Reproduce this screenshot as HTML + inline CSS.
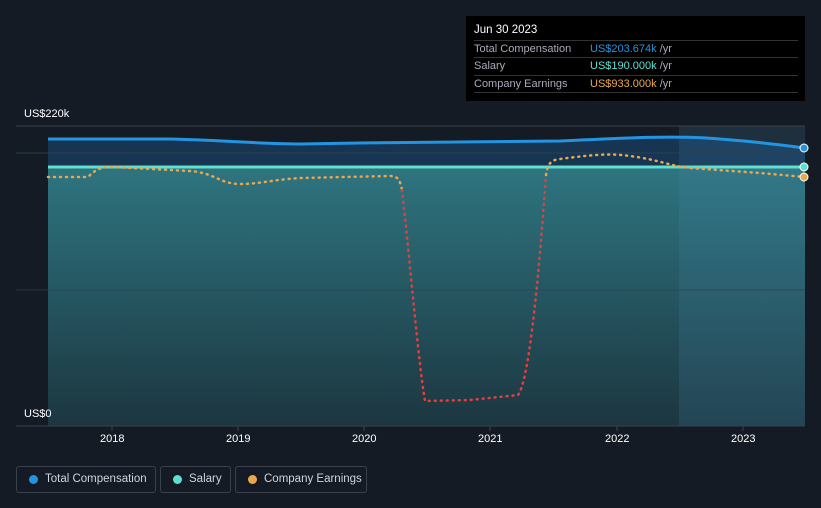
<!DOCTYPE html>
<html><head><style>
body{margin:0;background:#151b24;font-family:"Liberation Sans",sans-serif;}
.wrap{position:relative;width:821px;height:508px;overflow:hidden;}
.tt{position:absolute;left:466px;top:16px;width:339px;height:85px;background:#000;color:#fff;font-size:11px}
.tt .h{position:absolute;left:8px;top:8px;font-size:11.5px}
.tt .r{position:absolute;left:8px;width:324px;height:17px;border-top:1px solid #333;color:#aab}
.tt .r span{position:absolute;left:116px;top:2px;white-space:nowrap}
.tt .r b{font-weight:normal}
.leg{position:absolute;top:466px;height:27px;border:1px solid #3a414c;border-radius:3px;color:#cfd4da;font-size:11.5px;line-height:25px;box-sizing:border-box;white-space:nowrap;overflow:hidden}
.leg i{position:absolute;left:12px;top:8px;width:9px;height:9px;border-radius:50%}
.lbl{position:absolute;color:#fff;font-size:11px}
</style></head><body><div class="wrap">
<svg width="821" height="508" style="position:absolute;left:0;top:0">
<defs><linearGradient id="g" x1="0" y1="0" x2="0" y2="1"><stop offset="0" stop-color="#2e7580"/><stop offset="1" stop-color="#1c3640"/></linearGradient>
<linearGradient id="g2" x1="0" y1="0" x2="0" y2="1"><stop offset="0" stop-color="#173552"/><stop offset="1" stop-color="#173a52"/></linearGradient></defs>
<rect x="48" y="126" width="757" height="300" fill="#151b24"/>
<path d="M48 139 L170 139 C220 140 260 144 300 144 L360 143 L560 141 C620 138 680 135 720 139 C760 142 790 146 805 148 L805 426 L48 426Z" fill="url(#g2)"/>
<rect x="48" y="167" width="757" height="259" fill="url(#g)"/>
<rect x="679" y="126" width="126" height="300" fill="#4a8cb0" opacity="0.18"/>
<line x1="16" y1="126" x2="805" y2="126" stroke="#3a414c"/>
<line x1="16" y1="153" x2="805" y2="153" stroke="#2c4050"/>
<line x1="16" y1="290" x2="805" y2="290" stroke="#2c4050" opacity="0.7"/>
<line x1="16" y1="426" x2="805" y2="426" stroke="#3a414c"/>
<g stroke="#3a414c"><line x1="112" y1="426" x2="112" y2="431"/><line x1="238" y1="426" x2="238" y2="431"/><line x1="364" y1="426" x2="364" y2="431"/><line x1="490" y1="426" x2="490" y2="431"/><line x1="617" y1="426" x2="617" y2="431"/><line x1="743" y1="426" x2="743" y2="431"/></g>
<path d="M48 139 L170 139 C220 140 260 144 300 144 L360 143 L560 141 C620 138 680 135 720 139 C760 142 790 146 805 148" fill="none" stroke="#2394e0" stroke-width="3"/>
<line x1="48" y1="167" x2="805" y2="167" stroke="#5ee0d0" stroke-width="3"/>
<path d="M48 177 L88 177 C95 170 100 167 112 167 L190 171 C215 173 220 184 240 184 C260 184 270 180 300 178 L390 176 C398 176 400 180 402 190" fill="none" stroke="#e8a850" stroke-width="2.5" stroke-dasharray="1 5" stroke-linecap="round"/>
<path d="M402 190 C410 260 418 360 425 401 L470 400 L518 395 C530 380 540 260 546 175" fill="none" stroke="#e04040" stroke-width="2.5" stroke-dasharray="1 5" stroke-linecap="round"/>
<path d="M546 175 C548 162 552 160 560 159 C590 155 610 153 630 156 C660 160 670 166 690 168 L760 173 L805 177" fill="none" stroke="#e8a850" stroke-width="2.5" stroke-dasharray="1 5" stroke-linecap="round"/>
<circle cx="804" cy="148" r="4" fill="#2394e0" stroke="#fff"/>
<circle cx="804" cy="167" r="4" fill="#5ee0d0" stroke="#fff"/>
<circle cx="804" cy="177" r="4" fill="#e8a850" stroke="#fff"/>
</svg>
<div class="lbl" style="left:24px;top:108px">US$220k</div>
<div class="lbl" style="left:24px;top:408px">US$0</div>
<div class="lbl" style="left:100px;top:433px">2018</div>
<div class="lbl" style="left:226px;top:433px">2019</div>
<div class="lbl" style="left:352px;top:433px">2020</div>
<div class="lbl" style="left:478px;top:433px">2021</div>
<div class="lbl" style="left:605px;top:433px">2022</div>
<div class="lbl" style="left:731px;top:433px">2023</div>
<div class="tt"><div class="h">Jun 30 2023</div>
<div class="r" style="top:24px"><span style="left:0">Total Compensation</span><span><b style="color:#2394e0">US$203.674k</b> /yr</span></div>
<div class="r" style="top:41px"><span style="left:0">Salary</span><span><b style="color:#5ee0d0">US$190.000k</b> /yr</span></div>
<div class="r" style="top:59px"><span style="left:0">Company Earnings</span><span><b style="color:#e8a850">US$933.000k</b> /yr</span></div>
<div class="r" style="top:76px;height:0"></div></div>
<div class="leg" style="left:16px;width:140px"><i style="background:#2394e0"></i><span style="margin-left:28px">Total Compensation</span></div>
<div class="leg" style="left:160px;width:71px"><i style="background:#5ee0d0"></i><span style="margin-left:28px">Salary</span></div>
<div class="leg" style="left:235px;width:132px"><i style="background:#e8a850"></i><span style="margin-left:28px">Company Earnings</span></div>
</div></body></html>
